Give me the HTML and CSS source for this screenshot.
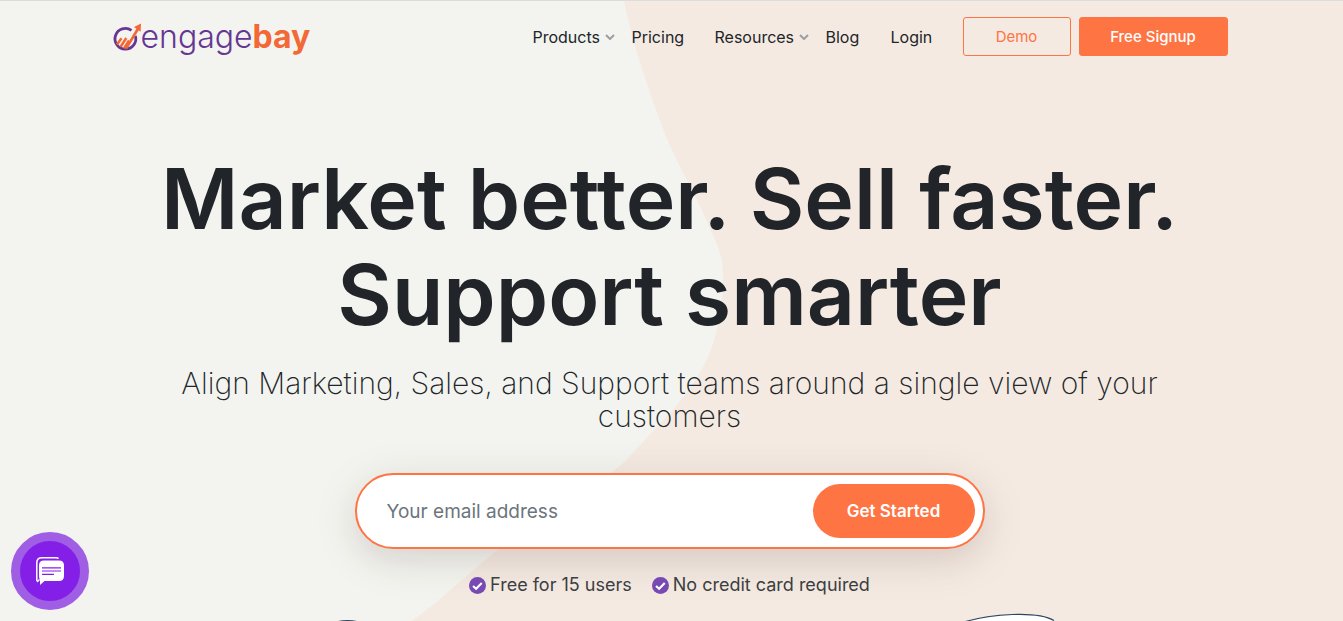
FILE: index.html
```html
<!DOCTYPE html>
<html lang="en">
<head>
<meta charset="utf-8">
<meta name="viewport" content="width=device-width, initial-scale=1">
<title>EngageBay</title>
<link rel="stylesheet" href="styles.css">
</head>
<body>
<div class="page">
  <svg class="backdrop" viewBox="0 0 1343 621" preserveAspectRatio="none" aria-hidden="true">
    <path fill="#f4eae1" d="M624 0C632 41 647 85 660 120C673 158 697 195 709 226C717 243 723 255 723 275C723 309 717 344 700 372C684 402 648 435 626 460C602 483 524 528 490 556C463 578 441 600 412 621H1343V0Z"/>
  </svg>

  <header class="header container">
    <a class="logo" href="#" aria-label="engagebay">
      <svg class="logo-mark" viewBox="0 0 29 29" aria-hidden="true">
        <path d="M19.500 8.400A10.400 10.400 0 1 0 23.400 14" fill="none" stroke="#663695" stroke-width="2.800"/>
        <path d="M5 22.500L9.500 16.200M8.600 24.800L14.300 16M12 26.400L17 18.500" fill="none" stroke="#f26836" stroke-width="2.500"/>
        <path d="M14 26.600L26.500 6" fill="none" stroke="#f26836" stroke-width="2.700"/>
        <path d="M29 1.500L22 5L28.600 9.800Z" fill="#f26836"/>
      </svg>
      <span class="logo-text">engage<b class="logo-strong">bay</b></span>
    </a>
    <nav class="nav">
      <a class="nav-link" href="#">Products
        <svg class="chevron" viewBox="0 0 10 6" aria-hidden="true"><path d="M1 1L5 5L9 1"/></svg></a>
      <a class="nav-link" href="#">Pricing</a>
      <a class="nav-link" href="#">Resources
        <svg class="chevron" viewBox="0 0 10 6" aria-hidden="true"><path d="M1 1L5 5L9 1"/></svg></a>
      <a class="nav-link" href="#">Blog</a>
      <a class="nav-link" href="#">Login</a>
    </nav>
    <a class="button button-outline" href="#">Demo</a>
    <a class="button button-solid" href="#">Free Signup</a>
  </header>

  <main class="hero container">
    <h1 class="title">Market better. Sell faster.<br>Support smarter</h1>
    <p class="subtitle">Align Marketing, Sales, and Support teams around a single view of your<br>customers</p>
    <form class="signup">
      <input class="email" type="email" placeholder="Your email address" aria-label="Your email address">
      <button class="submit" type="button">Get Started</button>
    </form>
    <ul class="perks">
      <li class="perk"><svg class="check" viewBox="0 0 16 16" aria-hidden="true"><circle cx="8" cy="8" r="8"/><path d="M3.800 8.400L6.700 11L12 5.600"/></svg>Free for 15 users</li>
      <li class="perk"><svg class="check" viewBox="0 0 16 16" aria-hidden="true"><circle cx="8" cy="8" r="8"/><path d="M3.800 8.400L6.700 11L12 5.600"/></svg>No credit card required</li>
    </ul>
  </main>

  <svg class="illustration" viewBox="0 0 1343 10" aria-hidden="true">
    <ellipse cx="347.500" cy="15" rx="17" ry="6" fill="#2b4660"/>
    <path d="M964 11C990 3 1037 -.5 1054 9.500V11Z" fill="#fff"/>
    <path d="M964 11C990 3 1037 -.5 1054 9.500" fill="none" stroke="#2b4660" stroke-width="1.200"/>
  </svg>

  <button class="chat" type="button" aria-label="Open chat">
    <svg class="chat-icon" viewBox="0 0 28 28" aria-hidden="true">
      <path d="M.8 24V6Q.8 .8 6 .8H20Q22 .8 22.500 1.600" fill="none" stroke="#fff" stroke-width="1.500"/>
      <path d="M1 25L3.500 22.500" stroke="#fff" stroke-width="1.500"/>
      <path d="M8 3.500H23Q28 3.500 28 8.500V19Q28 24 23 24H8.500L4 28V23Q3 21.500 3 19V8.500Q3 3.500 8 3.500Z" fill="#fff"/>
      <path d="M6 10.800H25M6 14H25M6 17.400H18" stroke="#841fe8" stroke-width="1.200"/>
    </svg>
  </button>
</div>
</body>
</html>
```

FILE: styles.css
```css
* { box-sizing: border-box; }

body {
  margin: 0;
  background: #f3f4ef;
  color: #212529;
  font-family: Inter, "Liberation Sans", sans-serif;
}

.page {
  position: relative;
  min-height: 100vh;
  overflow: hidden;
  border-top: 1px solid #dcdcdd;
}

.backdrop {
  position: absolute;
  inset: 0;
  z-index: -1;
  width: 100%;
  height: 100%;
}

.container {
  max-width: 1140px;
  margin: 0 auto;
  padding: 0 14px 0 10px;
}

.header {
  display: flex;
  align-items: center;
  gap: 8px;
  height: 71px;
}

.logo {
  display: flex;
  align-items: center;
  margin-right: auto;
  text-decoration: none;
}

.logo-mark { width: 29px; height: 29px; }

.logo-text {
  color: #663695;
  font-size: 32px;
  font-weight: 300;
  line-height: 36px;
}

.logo-strong { color: #f26836; font-weight: 700; }

.nav {
  display: grid;
  grid-template-columns: 99px 83px 111px 65px 64px;
}

.nav-link {
  display: flex;
  align-items: center;
  gap: 5px;
  color: #212529;
  font-size: 16px;
  line-height: 24px;
  text-decoration: none;
}

.chevron {
  width: 10px;
  height: 6px;
  fill: none;
  stroke: #9b9fa3;
  stroke-width: 2;
}

.button {
  border: 1px solid #ff7443;
  border-radius: 3px;
  font-size: 15px;
  line-height: 37px;
  text-align: center;
  text-decoration: none;
  white-space: nowrap;
}

.button-outline { width: 108px; color: #ff7443; font-weight: 400; }
.button-solid { width: 149px; background: #ff7443; color: #fff; font-weight: 500; }

.hero {
  display: flex;
  flex-direction: column;
  align-items: center;
  padding-top: 79px;
  text-align: center;
}

.title {
  margin: 0;
  font-size: 84px;
  font-weight: 600;
  line-height: 96px;
}

.subtitle {
  margin: 24px 0 0;
  font-size: 30px;
  font-weight: 200;
  line-height: 33px;
}

.signup {
  display: flex;
  width: 100%;
  max-width: 630px;
  height: 76px;
  margin-top: 40px;
  padding: 9px 8px 9px 30px;
  border: 2px solid #ff7443;
  border-radius: 38px;
  background: #fff;
  box-shadow: 0 10px 48px rgba(60, 35, 35, 0.11), 0 12px 24px rgba(80, 35, 50, 0.06);
}

.email {
  flex: 1;
  min-width: 0;
  padding: 0;
  border: 0;
  outline: 0;
  background: transparent;
  color: #212529;
  font: 400 19px Inter, "Liberation Sans", sans-serif;
}

.email::placeholder { color: #6c757d; opacity: 1; }

.submit {
  width: 162px;
  border: 0;
  border-radius: 27px;
  background: #ff7443;
  color: #fff;
  font: 600 17px Inter, "Liberation Sans", sans-serif;
}

.perks {
  display: flex;
  gap: 20px;
  margin: 24px 0 0;
  padding: 0;
  list-style: none;
  color: #3b3e42;
  font-size: 18px;
  line-height: 24px;
}

.perk { display: flex; align-items: center; gap: 4px; }

.check { width: 17px; height: 17px; fill: #7749b3; }

.check path {
  fill: none;
  stroke: #fff;
  stroke-width: 2;
}

.illustration {
  position: absolute;
  bottom: 0;
  left: 0;
  width: 100%;
}

.chat {
  position: absolute;
  bottom: 11px;
  left: 11px;
  display: grid;
  place-items: center;
  width: 78px;
  height: 78px;
  padding: 0;
  border: 9px solid #a05ee5;
  border-radius: 50%;
  background: #841fe8;
}

.chat-icon { width: 28px; height: 28px; }
```
